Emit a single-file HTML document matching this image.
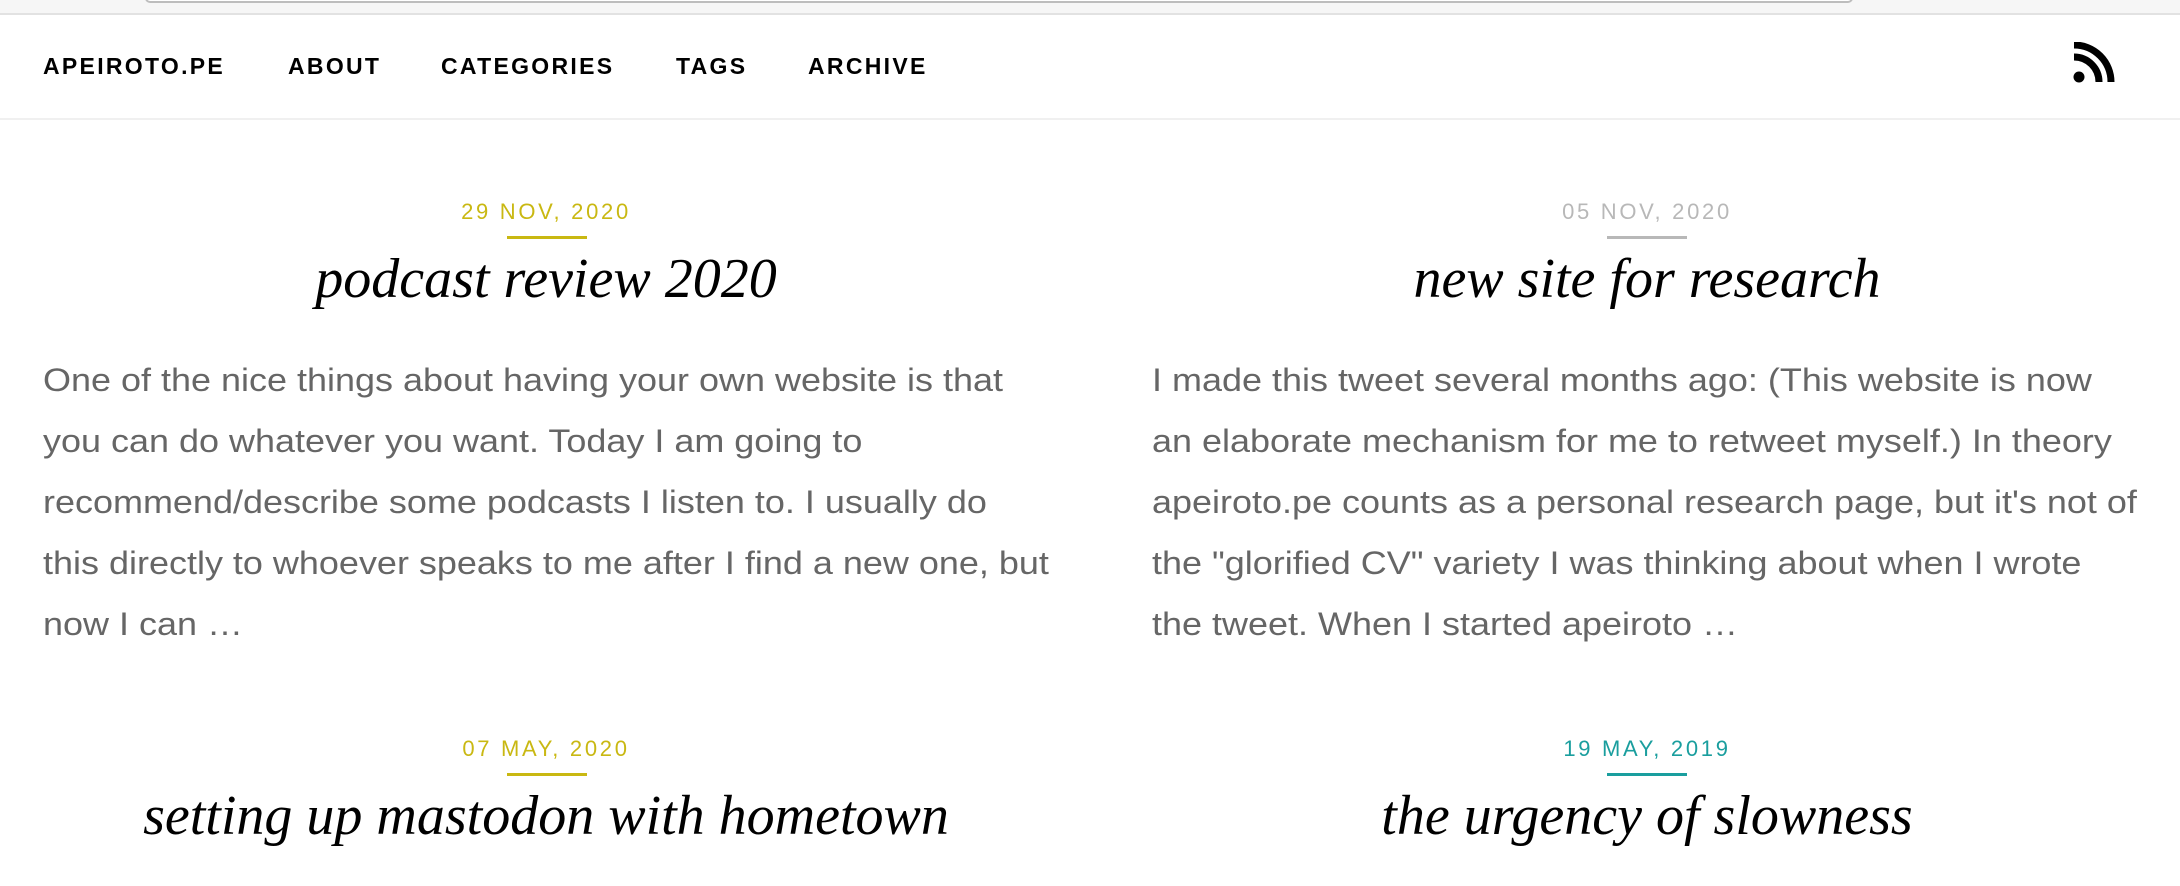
<!DOCTYPE html>
<html><head><meta charset="utf-8"><style>
*{margin:0;padding:0;box-sizing:border-box}
body{width:2180px;height:886px;overflow:hidden;background:#fff;position:relative;font-family:"Liberation Sans",sans-serif}
.top{position:absolute;left:0;top:0;width:2180px;height:15px;background:#f6f6f6;border-bottom:2px solid #e2e2e2}
.box{position:absolute;left:145px;top:-6px;width:1708px;height:9px;border:2px solid #bdbdbd;border-top:none;border-radius:0 0 5px 5px;background:#fff}
.nav{position:absolute;top:15px;left:0;width:2180px;height:105px;border-bottom:2px solid #f0f0f0}
.nav a{position:absolute;top:38px;font-size:23px;font-weight:bold;letter-spacing:2.3px;color:#000;text-decoration:none}
.rss{position:absolute;left:2073px;top:42px}
.d{position:absolute;width:1000px;text-align:center;font-size:22px;letter-spacing:2.7px}
.u{position:absolute;height:3px;width:80px}
.t{position:absolute;width:1100px;text-align:center;font-family:"Liberation Serif",serif;font-style:italic;font-size:56px;color:#000;white-space:nowrap}
.p{position:absolute;font-size:32.5px;line-height:61px;color:#666;white-space:nowrap;transform:scaleX(1.107);transform-origin:0 0}
</style></head><body>
<div class="top"><div class="box"></div></div>
<div class="nav">
<a style="left:43px">APEIROTO.PE</a>
<a style="left:288px">ABOUT</a>
<a style="left:441px">CATEGORIES</a>
<a style="left:676px">TAGS</a>
<a style="left:808px">ARCHIVE</a>
</div>
<svg class="rss" width="44" height="41" viewBox="0 0 44 41"><circle cx="6" cy="35" r="5.5" fill="#000"/><path d="M1 15 A25 25 0 0 1 26 40" stroke="#000" stroke-width="7" fill="none"/><path d="M1 3 A37 37 0 0 1 38 40" stroke="#000" stroke-width="7" fill="none"/></svg>

<div class="d" style="left:46px;top:199px;color:#c9b812">29 NOV, 2020</div>
<div class="u" style="left:507px;top:236px;background:#c9b812"></div>
<div class="t" style="left:-4px;top:247px">podcast review 2020</div>
<div class="p" style="left:43px;top:350px">One of the nice things about having your own website is that<br>you can do whatever you want. Today I am going to<br>recommend/describe some podcasts I listen to. I usually do<br>this directly to whoever speaks to me after I find a new one, but<br>now I can …</div>

<div class="d" style="left:1147px;top:199px;color:#b8b8b8">05 NOV, 2020</div>
<div class="u" style="left:1607px;top:236px;background:#b8b8b8"></div>
<div class="t" style="left:1097px;top:247px">new site for research</div>
<div class="p" style="left:1152px;top:350px">I made this tweet several months ago: (This website is now<br>an elaborate mechanism for me to retweet myself.) In theory<br>apeiroto.pe counts as a personal research page, but it's not of<br>the "glorified CV" variety I was thinking about when I wrote<br>the tweet. When I started apeiroto …</div>

<div class="d" style="left:46px;top:736px;color:#c9b812">07 MAY, 2020</div>
<div class="u" style="left:507px;top:773px;background:#c9b812"></div>
<div class="t" style="left:-4px;top:784px">setting up mastodon with hometown</div>

<div class="d" style="left:1147px;top:736px;color:#1a9e9e">19 MAY, 2019</div>
<div class="u" style="left:1607px;top:773px;background:#1a9e9e"></div>
<div class="t" style="left:1097px;top:784px">the urgency of slowness</div>
</body></html>
